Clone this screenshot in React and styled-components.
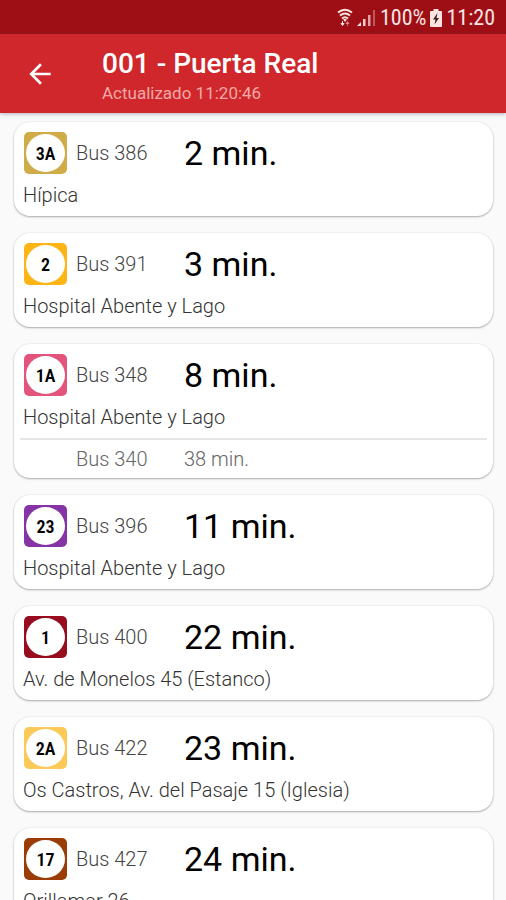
import styled, { createGlobalStyle } from "styled-components";

const GlobalStyle = createGlobalStyle`
  * {
    box-sizing: border-box;
  }
  body {
    margin: 0;
    background: #fafafa;
    font-family: Roboto, "Liberation Sans", sans-serif;
  }
`;
const Screen = styled.div`
  display: flex;
  flex-direction: column;
  height: 100vh;
  overflow: hidden;
`;
const StatusBar = styled.div`
  display: flex;
  flex: none;
  align-items: center;
  justify-content: flex-end;
  gap: 4px;
  height: 34px;
  padding: 2px 11px 0;
  background: #9d0f14;
  color: #fbe4e2;
  font-family: "Roboto Condensed", Roboto, "Liberation Sans", sans-serif;
  font-size: 22px;
  line-height: 24px;
  svg {
    flex: none;
  }
`;
const AppBar = styled.header`
  display: flex;
  flex: none;
  align-items: center;
  gap: 46px;
  padding: 10px 24px;
  background: #cf272b;
  color: #ffffff;
  box-shadow: 0 1px 4px rgba(60, 70, 110, 0.4);
  z-index: 1;
`;
const BackButton = styled.button`
  display: flex;
  padding: 0;
  border: 0;
  background: none;
  color: inherit;
  cursor: pointer;
`;
const StopName = styled.h1`
  margin: 0;
  font-size: 28px;
  font-weight: 500;
  line-height: 39px;
`;
const Updated = styled.p`
  margin: 0;
  color: #f4a9a6;
  font-size: 17px;
  line-height: 20px;
`;
const Arrivals = styled.main`
  display: flex;
  flex: 1;
  flex-direction: column;
  gap: 17px;
  min-height: 0;
  padding: 9px 13px 17px 14px;
  overflow-y: auto;
  scrollbar-width: none;
`;
const Card = styled.article`
  flex: none;
  border-radius: 16px;
  background: #ffffff;
  box-shadow: 0 1px 2px rgba(0, 0, 0, 0.3), 0 0 2px rgba(0, 0, 0, 0.1);
`;
const CardBody = styled.div`
  padding: 10px 10px 8px 9px;
`;
const ArrivalRow = styled.div`
  display: grid;
  grid-template-columns: 44px 99px 1fr;
  align-items: center;
  column-gap: 9px;
`;
const NextRow = styled(ArrivalRow)`
  margin: 0 6px;
  padding: 7px 4px 7px 3px;
  border-top: 2px solid #e6e6e6;
`;
const LineBadge = styled.div`
  display: flex;
  height: 42px;
  margin-left: 1px;
  padding: 2px;
  border-radius: 5px;
  background: ${({ color }) => color};
`;
const LineNumber = styled.span`
  display: flex;
  flex: 1;
  align-items: center;
  justify-content: center;
  border-radius: 50%;
  background: #ffffff;
  color: #000000;
  font-family: "Roboto Condensed", Roboto, "Liberation Sans", sans-serif;
  font-size: 18px;
  font-weight: 600;
`;
const Bus = styled.span`
  grid-column: 2;
  color: ${({ $muted }) => ($muted ? "#666666" : "#444444")};
  font-size: 20px;
  font-weight: 300;
  line-height: 24px;
`;
const Minutes = styled.span`
  color: #000000;
  font-size: 34px;
  line-height: 42px;
`;
const NextMinutes = styled.span`
  color: #666666;
  font-size: 20px;
  font-weight: 300;
  line-height: 24px;
`;
const Destination = styled.p`
  margin: 8px 0 0;
  color: #333333;
  font-size: 20px;
  font-weight: 300;
  line-height: 26px;
`;

const arrivals = [
  { line: "3A", color: "#cfac47", bus: 386, minutes: 2, destination: "Hípica" },
  { line: "2", color: "#fdb515", bus: 391, minutes: 3, destination: "Hospital Abente y Lago" },
  { line: "1A", color: "#e2547b", bus: 348, minutes: 8, destination: "Hospital Abente y Lago", next: { bus: 340, minutes: 38 } },
  { line: "23", color: "#8633a5", bus: 396, minutes: 11, destination: "Hospital Abente y Lago" },
  { line: "1", color: "#970c1e", bus: 400, minutes: 22, destination: "Av. de Monelos 45 (Estanco)" },
  { line: "2A", color: "#fbc958", bus: 422, minutes: 23, destination: "Os Castros, Av. del Pasaje 15 (Iglesia)" },
  { line: "17", color: "#993c06", bus: 427, minutes: 24, destination: "Orillamar 26" },
];

const WifiIcon = () => (
  <svg width="16" height="20" viewBox="0 0 16 20" fill="none" stroke="currentColor" strokeWidth="2" aria-hidden="true">
    <path d="M1 4.5Q8 -1 15 4.5" />
    <path d="M3 7.5Q8 3.5 13 7.5" />
    <path d="M5 10.5Q8 8 11 10.5" />
    <path d="M6 11h4L8 14z" fill="currentColor" stroke="none" />
    <path d="M5.5 13v4M4 15.5l1.5 2 1.5-2z" strokeWidth="1" fill="currentColor" />
    <path d="M10.5 18v-4M9 15.5l1.5-2 1.5 2z" strokeWidth="1" opacity="0.45" />
  </svg>
);
const SignalIcon = () => (
  <svg width="19" height="18" viewBox="0 0 19 18" fill="currentColor" aria-hidden="true">
    <path d="M0 17l4-4v4z" />
    <path d="M6 10h2.500v7H6z" opacity="0.9" />
    <path d="M11 6h2.500v11H11z" opacity="0.7" />
    <path d="M16 1h2v16h-2z" opacity="0.35" />
  </svg>
);
const BatteryIcon = () => (
  <svg width="12" height="18" viewBox="0 0 12 18" aria-hidden="true">
    <path d="M3.5 0h5v2H11a1 1 0 0 1 1 1v14a1 1 0 0 1-1 1H1a1 1 0 0 1-1-1V3a1 1 0 0 1 1-1h2.500z" fill="currentColor" />
    <path d="M7.500 4L3 10.500h2.500L4.500 15.500 9 9H6.500z" fill="#3a2022" />
  </svg>
);
const BackIcon = () => (
  <svg width="32" height="32" viewBox="0 0 24 24" fill="currentColor" aria-hidden="true">
    <path d="M20 11H7.830l5.590-5.590L12 4l-8 8 8 8 1.410-1.410L7.830 13H20v-2z" />
  </svg>
);

const ArrivalCard = ({ line, color, bus, minutes, destination, next }) => {
  return (
    <Card>
      <CardBody>
        <ArrivalRow>
          <LineBadge color={color}>
            <LineNumber>{line}</LineNumber>
          </LineBadge>
          <Bus>Bus {bus}</Bus>
          <Minutes>{minutes} min.</Minutes>
        </ArrivalRow>
        <Destination>{destination}</Destination>
      </CardBody>
      {next ? (
        <NextRow>
          <Bus $muted>Bus {next.bus}</Bus>
          <NextMinutes>{next.minutes} min.</NextMinutes>
        </NextRow>
      ) : null}
    </Card>
  );
};

export default function App() {
  return (
    <Screen>
      <GlobalStyle />
      <StatusBar>
        <WifiIcon />
        <SignalIcon />
        <span>100%</span>
        <BatteryIcon />
        <span>11:20</span>
      </StatusBar>
      <AppBar>
        <BackButton type="button" aria-label="Volver">
          <BackIcon />
        </BackButton>
        <div>
          <StopName>001 - Puerta Real</StopName>
          <Updated>Actualizado 11:20:46</Updated>
        </div>
      </AppBar>
      <Arrivals>
        {arrivals.map((arrival) => (
          <ArrivalCard key={arrival.bus} {...arrival} />
        ))}
      </Arrivals>
    </Screen>
  );
}
